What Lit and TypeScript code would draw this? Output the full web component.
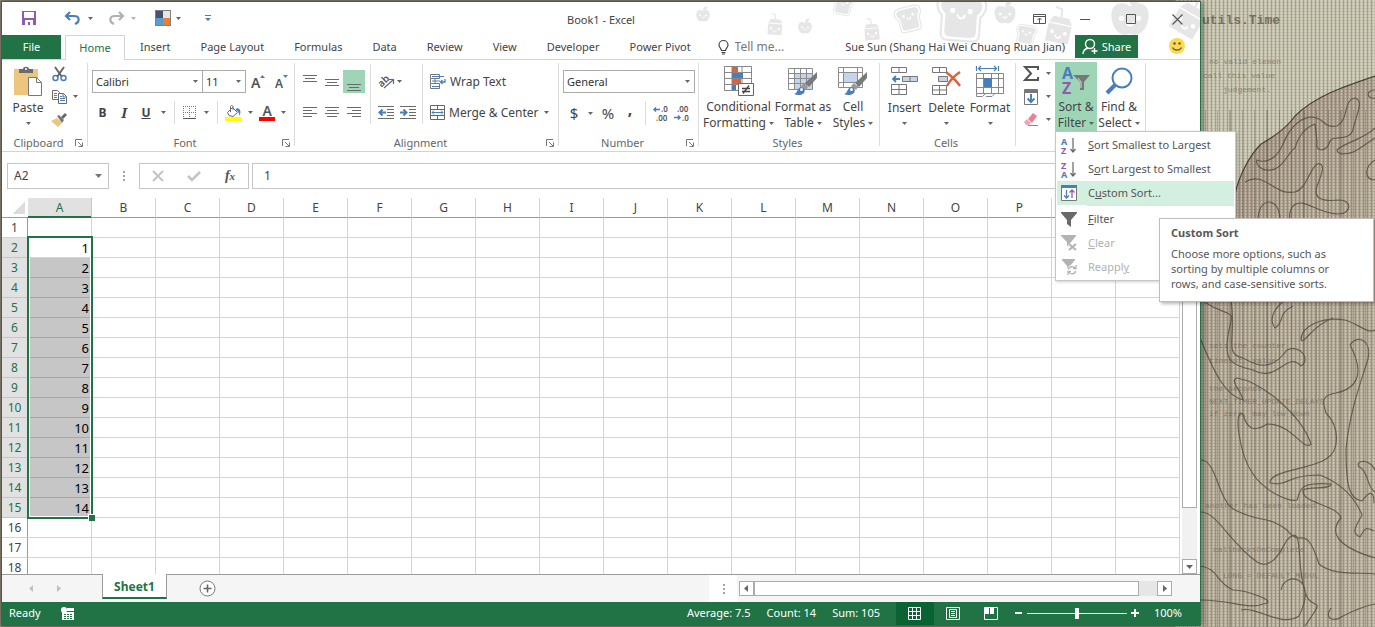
import { LitElement, html, svg, css } from "lit";
import { customElement } from "lit/decorators.js";
import { classMap } from "lit/directives/class-map.js";

const arrow = html`<svg class="arrow" viewBox="0 0 5 3" width="5" height="3"><path d="M0 0h5L2.500 3z" /></svg>`;

const icon = (w: number, h: number, body: unknown) =>
  html`<svg class="icon" width=${w} height=${h} viewBox="0 0 ${w} ${h}" aria-hidden="true">${body}</svg>`;

const BLUE = "#4a7ebb";
const GREY = "#6a6a6a";
const PURPLE = "#8e5bb0";

const lines = (rows: [number, number, number][]) =>
  svg`<g shape-rendering="crispEdges" fill=${GREY}>${rows.map(([x, y, w]) => svg`<rect x=${x} y=${y} width=${w} height="1"/>`)}</g>`;

const brush = svg`<path d="M29 6v6l-8 9-4-4z" fill="#7a7a7a"/><path d="M16 17l4 4-2 3-5-4z" fill="#9a9a9a"/><path d="M6 28c4-1 3-6 7-7 3 0 5 3 3 6-2 2-6 3-10 1z" fill=${BLUE}/><circle cx="13.500" cy="23.500" r="1.500" fill="#fff"/>`;

const icons = {
  save: icon(14, 14, svg`<path d="M0 0h14v14H0z" fill=${PURPLE}/><path d="M2 1h10v6H2zM3 9h8v5H3z" fill="#fff"/><path d="M6 11h2v3H6z" fill=${PURPLE}/>`),
  undo: icon(15, 13, svg`<path d="M2 4h7c6 0 6 6 1 8" fill="none" stroke=${BLUE} stroke-width="2.200"/><path d="M5 0L1 4l4 4" fill="none" stroke=${BLUE} stroke-width="2.200"/>`),
  redo: icon(15, 13, svg`<path d="M13 4H6C0 4 0 10 5 12" fill="none" stroke="#b0b0b0" stroke-width="2.200"/><path d="M10 0l4 4-4 4" fill="none" stroke="#b0b0b0" stroke-width="2.200"/>`),
  theme: icon(16, 16, svg`<path d="M0 0h16v16H0z" fill="#808080"/><path d="M1 1h7v7H1z" fill="#44546a"/><path d="M8 1h7v7H8z" fill="#e7e6e6"/><path d="M1 8h7v7H1z" fill="#5b9bd5"/><path d="M8 8h7v7H8z" fill="#ed7d31"/>`),
  custom: icon(6, 8, svg`<path d="M0 1h6v1H0z M0 4h6L3 7z" fill=${BLUE}/>`),
  ribbon: icon(13, 10, svg`<path d="M.5.5h12v9H.5zM.5 2.500h12M6.500 9V4.500M4.500 6l2-2 2 2" fill="none" stroke="#555"/>`),
  min: icon(10, 10, svg`<path d="M0 5.500h10" stroke="#555"/>`),
  max: icon(10, 10, svg`<path d="M.5.5h9v9h-9z" fill="none" stroke="#555"/>`),
  close: icon(11, 11, svg`<path d="M.5.5l10 10M10.500.5l-10 10" stroke="#555" stroke-width="1.200"/>`),
  bulb: icon(11, 15, svg`<path d="M3.500 10.500c0-2-2.500-3-2.500-5.500a4.500 4.500 0 0 1 9 0c0 2.500-2.500 3.500-2.500 5.500zM3.500 12.500h4M4 14h3" fill="none" stroke="#444" stroke-width="1.200"/>`),
  person: icon(16, 17, svg`<g fill="none" stroke="#fff" stroke-width="1.400"><circle cx="8" cy="6" r="4.500"/><path d="M1 16c0-3 2-5 5-6M12.500 10v6M9.500 13h6"/></g>`),
  smile: icon(16, 16, svg`<circle cx="8" cy="8" r="8" fill="#fbdb4b"/><circle cx="5.500" cy="5.500" r="1.200" fill="#4a5568"/><circle cx="10.500" cy="5.500" r="1.200" fill="#4a5568"/><path d="M3.500 9.500c2 3.500 7 3.500 9 0" fill="none" stroke="#4a5568" stroke-width="1.200"/>`),
  paste: icon(30, 31, svg`<path d="M1 3h24v26H1z" fill="#ecc67e"/><path d="M6 7V3h4c0-3 6-3 6 0h4v4z" fill="#6b6b6b"/><circle cx="13" cy="3" r="1" fill="#fff"/><path d="M15.500 11.500h8l5 5v13h-13z" fill="#fff" stroke="#777"/><path d="M23.500 11.500v5h5" fill="none" stroke="#777"/>`),
  cut: icon(15, 16, svg`<path d="M3 1l7 10M12 1L5 11" stroke="#666" stroke-width="2"/><circle cx="3.500" cy="12" r="2.500" fill="none" stroke=${BLUE} stroke-width="1.500"/><circle cx="11.500" cy="12" r="2.500" fill="none" stroke=${BLUE} stroke-width="1.500"/>`),
  copy: icon(15, 14, svg`<path d="M.5.5h5l2 2v7h-7z" fill="#fff" stroke=${GREY}/><path d="M6.500 3.500h5l3 3v7h-8z" fill="#fff" stroke=${GREY}/><path d="M11 3.500V7h3.500" fill="none" stroke=${GREY}/><path d="M2 3.500h3M2 5.500h3M2 7.500h3M8 6.500h2M8 8.500h5M8 10.500h5" stroke=${BLUE}/>`),
  painter: icon(16, 14, svg`<path d="M0 8l6-3 5 5-4 4z" fill="#ecc67e"/><path d="M6 3l2-1 5 5-2 3z" fill="#777"/><path d="M10 4l4-4 2 2-4 4z" fill="#666"/>`),
  growFont: icon(14, 14, svg`<text x="0" y="13" class="glyph g14">A</text><path d="M9 3h5L11.500 0z" fill=${BLUE}/>`),
  shrinkFont: icon(13, 14, svg`<text x="0" y="13" class="glyph g12">A</text><path d="M8 0h5l-2.500 3z" fill=${BLUE}/>`),
  borders: icon(13, 13, svg`<path d="M.5 0v12M6.500 0v12M12.500 0v12M0 .5h13M0 6.500h13" fill="none" stroke="#777" stroke-dasharray="1 1"/><path d="M0 12.500h13" stroke="#555"/>`),
  fill: icon(16, 16, svg`<path d="M0 12h16v4H0z" fill="#ff0"/><path d="M2.500 7.500l5-5 5 5-4.500 4-4-1z" fill="#fff" stroke="#666"/><path d="M5.500 7V2c0-2 2.500-2 2.500 0v3" fill="none" stroke="#666"/><path d="M12 3c4 1 4 4 2.500 8-.5-3-1-5-4-6z" fill=${BLUE}/>`),
  fontColor: icon(16, 16, svg`<path d="M0 12h16v4H0z" fill="#f00"/><text x="3.500" y="11" class="glyph g14">A</text>`),
  top: icon(14, 22, lines([[0, 4, 14], [2, 7, 10], [0, 10, 14]])),
  middle: icon(14, 22, lines([[0, 8, 14], [2, 11, 10], [0, 14, 14]])),
  bottom: icon(14, 22, lines([[0, 13, 14], [2, 16, 10], [0, 19, 14]])),
  left: icon(14, 11, lines([[0, 0, 14], [0, 3, 9], [0, 6, 14], [0, 9, 9]])),
  center: icon(14, 11, lines([[0, 0, 14], [2, 3, 10], [0, 6, 14], [2, 9, 10]])),
  right: icon(14, 11, lines([[0, 0, 14], [5, 3, 9], [0, 6, 14], [5, 9, 9]])),
  orient: icon(17, 16, svg`<text x="0" y="11" class="glyph g10" transform="rotate(-45 5 8)">ab</text><path d="M6 14l9-8M11 5.500h4.500V10" fill="none" stroke="#666" stroke-width="1.200"/>`),
  outdent: icon(16, 13, svg`${lines([[0, 0, 16], [9, 3, 7], [9, 6, 7], [9, 9, 7], [0, 12, 16]])}<path d="M2 6.500h6M4.500 3.500l-3 3 3 3" fill="none" stroke=${BLUE} stroke-width="2"/>`),
  indent: icon(16, 13, svg`${lines([[0, 0, 16], [9, 3, 7], [9, 6, 7], [9, 9, 7], [0, 12, 16]])}<path d="M0 6.500h6M3.500 3.500l3 3-3 3" fill="none" stroke=${BLUE} stroke-width="2"/>`),
  wrap: icon(16, 15, svg`<path d="M.5.5h9v4h-9zM.5 9.500h9v5h-9zM.5 5v4M5 5v4" fill="none" stroke="#777"/><path d="M2 2.500h12M2 7h8M2 12.500h8" stroke=${BLUE}/><path d="M15 5v3h-4M12.500 6l-2 2 2 2" fill="none" stroke=${BLUE} stroke-width="1.300"/>`),
  merge: icon(15, 15, svg`<path d="M.5.5h14v14H.5zM.5 4.500h14M.5 10.500h14M7.500.5v4M7.500 10.500v4" fill="none" stroke="#666"/><path d="M2 7.500h11M4 5.500l-2 2 2 2M11 5.500l2 2-2 2" fill="none" stroke=${BLUE}/>`),
  incDec: icon(16, 15, svg`<path d="M1 3.500h6M3 1.500l-2 2 2 2" fill="none" stroke=${BLUE} stroke-width="1.500"/><text x="8" y="6" class="glyph g8">.0</text><text x="3" y="15" class="glyph g8">.00</text>`),
  decDec: icon(16, 15, svg`<path d="M0 11.500h6M4 9.500l2 2-2 2" fill="none" stroke=${BLUE} stroke-width="1.500"/><text x="3" y="6" class="glyph g8">.00</text><text x="8" y="15" class="glyph g8">.0</text>`),
  cond: icon(30, 31, svg`<path d="M.5.5h27v24H.5zM.5 6.500h27M.5 12.500h27M.5 18.500h27M8 .5v24M18 .5v24" fill="#fff" stroke="#888"/><path d="M8 1h6v5H8zM8 13h9v5H8z" fill="#d9623f"/><path d="M8 7h11v5H8zM8 19h4v5H8z" fill=${BLUE}/><path d="M14.500 17.500h15v12h-15z" fill="#fff" stroke="#666"/><path d="M18 22.500h8M18 25.500h8M25 19.500l-6 8" stroke="#444" stroke-width="1.300"/>`),
  table: icon(30, 30, svg`<path d="M.5 2.500h27v22H.5z" fill="#fff"/><path d="M7 8h17v16H7z" fill="#c3d5ec"/><path d="M.5 2.500h24v21H.5zM.5 7.500h24M.5 12.500h24M.5 17.500h24M6.500 2.500v21M12.500 2.500v21M18.500 2.500v21" fill="none" stroke="#8c8c8c"/>${brush}`),
  cell: icon(30, 30, svg`<path d="M.5 1.500h26v21H.5z" fill="#fff"/><path d="M6 7h14v9H6z" fill="#c3d5ec"/><path d="M.5 1.500h24v20H.5zM.5 6.500h24M.5 16.500h24M5.500 1.500v20M19.500 1.500v20" fill="none" stroke="#8c8c8c"/>${brush}`),
  insert: icon(27, 28, svg`<path d="M.5.5h15v5H.5zM8 .5v5M.5 17.500h15v10H.5zM8 17.500v10M.5 22.500h15" fill="#fff" stroke="#777"/><path d="M11.500 9.500h15v5h-15zM19 9.500v5" fill="#c3d5ec" stroke="#777"/><path d="M2 12h7M5 9l-3 3 3 3" fill="none" stroke=${BLUE} stroke-width="1.800"/>`),
  del: icon(30, 29, svg`<path d="M.5.5h14v5H.5zM7.500.5v5M.5 18.500h14v9H.5zM7.500 18.500v9M.5 23h14" fill="#fff" stroke="#777"/><path d="M6.500 9.500h9v5h-9z" fill="#c3d5ec" stroke="#777"/><path d="M14 5c5 4 10 8 14 14M28 5c-6 4-10 8-13 14" fill="none" stroke="#d9623f" stroke-width="2.400"/>`),
  format: icon(28, 31, svg`<path d="M.5 0v5M22.500 0v5M2 2.500h19M5 0L2.500 2.500 5 5M18 0l2.500 2.500L18 5" fill="none" stroke=${BLUE} stroke-width="1.200"/><path d="M.5 7.500h27v20H.5zM7.500 7.500v20M15.500 7.500v20M22.500 7.500v20M.5 12.500h27M.5 21.500h27M.5 27.500v3h6l3-3M10 30.500h6l3-3" fill="none" stroke="#888"/><path d="M8 12h8v9H8z" fill=${BLUE}/>`),
  sum: icon(15, 15, svg`<path d="M14 4V1H1l6 6.500L1 14h13v-3" fill="none" stroke="#555" stroke-width="2"/>`),
  down: icon(14, 16, svg`<path d="M.5.5h13v15H.5z" fill="#fff" stroke="#777"/><path d="M1 1h12v3H1z" fill="#777"/><path d="M7 5v8M3.500 9.500L7 13l3.500-3.500" fill="none" stroke=${BLUE} stroke-width="2"/>`),
  eraser: icon(14, 13, svg`<path d="M4 6l5-6 4 3-5 7z" fill="#e8829a"/><path d="M0 9l3-3 4 4-2 2H2z" fill="#f0a5b5"/><path d="M4 12.500h10" stroke="#888"/>`),
  sort: icon(30, 29, svg`<text x="1" y="12" class="az g16" fill=${BLUE}>A</text><text x="1" y="27" class="az g16" fill=${PURPLE}>Z</text><path d="M12 8h17l-6 7v8h-4v-8z" fill="#777"/><path d="M17 11l3 4v6" fill="none" stroke="#ddd"/>`),
  find: icon(28, 28, svg`<circle cx="17" cy="11" r="9.500" fill="#fff" stroke=${BLUE} stroke-width="2"/><path d="M10 18l-8 8" stroke=${BLUE} stroke-width="4"/>`),
  az: icon(16, 17, svg`<text x="0" y="8" class="az g9" fill=${BLUE}>A</text><text x="0" y="17" class="az g9" fill=${PURPLE}>Z</text><path d="M12 1v13M9.500 12l2.500 3 2.500-3" fill="none" stroke="#666" stroke-width="1.200"/>`),
  za: icon(16, 17, svg`<text x="0" y="8" class="az g9" fill=${PURPLE}>Z</text><text x="0" y="17" class="az g9" fill=${BLUE}>A</text><path d="M12 1v13M9.500 12l2.500 3 2.500-3" fill="none" stroke="#666" stroke-width="1.200"/>`),
  customSort: icon(16, 16, svg`<path d="M.5.5h15v15H.5z" fill="#fff" stroke="#777"/><path d="M0 0h16v3H0z" fill=${BLUE}/><path d="M5.500 5v8M3 10.500l2.500 2.500L8 10.500" fill="none" stroke=${BLUE} stroke-width="1.300"/><path d="M11 13V5M8.500 7.500L11 5l2.500 2.500" fill="none" stroke=${PURPLE} stroke-width="1.300"/>`),
  funnel: icon(16, 15, svg`<path d="M0 0h16v1l-6 7v7L6 12V8L0 1z" fill="#6a6a6a"/>`),
  clear: icon(16, 16, svg`<path d="M0 0h15v1l-5 6v5l-4-1V7L0 1z" fill="#b3b3b3"/><path d="M8 9l7 6M15 9l-7 6" stroke="#fff" stroke-width="4"/><path d="M8 9l7 6M15 9l-7 6" stroke="#b3b3b3" stroke-width="2"/>`),
  reapply: icon(16, 16, svg`<path d="M1 0h13v1L9 7v4l-3-1V7L1 1z" fill="#b3b3b3"/><circle cx="11" cy="11" r="5" fill="#fff"/><path d="M7.500 10.500c0-3 5-4 7-1M15 6v3.500h-3M14.500 12c0 3-5 4-7 1M7 16v-3.500h3" fill="none" stroke="#b3b3b3" stroke-width="1.300"/>`),
  launcher: icon(8, 8, svg`<path d="M.5 7V.5H7M3 3l4 4M7.500 3.500v4h-4" fill="none" stroke="#777"/>`),
  macro: icon(13, 13, svg`<path d="M6 1h7v3H6zM1 5h12v8H1z" fill="#fff"/><circle cx="3" cy="3" r="3" fill="#fff"/><path d="M3 7.500h2M6 7.500h2M9 7.500h2M3 9.500h2M6 9.500h2M9 9.500h2M3 11.500h2M6 11.500h2M9 11.500h2" stroke="#217346"/>`),
  normal: icon(13, 13, svg`<path d="M.5.5h12v12H.5zM4.500 0v13M8.500 0v13M0 4.500h13M0 8.500h13" fill="none" stroke="#fff"/>`),
  page: icon(14, 13, svg`<path d="M.5.5h13v12H.5zM3.500 2.500h7v8h-7zM5 4.500h4M5 6.500h4M5 8.500h4" fill="none" stroke="#fff"/>`),
  breaks: icon(14, 13, svg`<path d="M.5.5h13v12H.5z" fill="none" stroke="#fff"/><path d="M1 1h4v6H1zM6 1h4v6H6z" fill="#fff"/>`),
  minus: icon(7, 8, svg`<path d="M0 3h7v2H0z" fill="#fff"/>`),
  plus: icon(8, 8, svg`<path d="M0 3h3V0h2v3h3v2H5v3H3V5H0z" fill="#fff"/>`),
  add: icon(17, 17, svg`<circle cx="8.500" cy="8.500" r="7.500" fill="#fff" stroke="#777"/><path d="M8.500 4.500v8M4.500 8.500h8" stroke="#666" stroke-width="1.600"/>`),
  x: icon(12, 10, svg`<path d="M1 0l10 10M11 0L1 10" stroke="#c4c4c4" stroke-width="2"/>`),
  check: icon(14, 10, svg`<path d="M1 5l4 4 8-8" fill="none" stroke="#c4c4c4" stroke-width="2.500"/>`),
  triLeft: icon(4, 7, svg`<path d="M4 0v7L0 3.500z" fill="currentColor"/>`),
  triRight: icon(4, 7, svg`<path d="M0 0v7l4-3.500z" fill="currentColor"/>`),
  triDown: icon(7, 4, svg`<path d="M0 0h7L3.500 4z" fill="currentColor"/>`),
};

const face = svg`<circle cx="-5" cy="-1" r="1.500" fill="#fff"/><circle cx="5" cy="-1" r="1.500" fill="#fff"/><path d="M-2 1c0 3 4 3 4 0" fill="none" stroke="#fff" stroke-width="1.200"/>`;
const apple = (x: number, y: number, s: number) =>
  svg`<g transform="translate(${x} ${y}) scale(${s})"><path d="M0-8c-5-4-11-1-11 5 0 7 5 14 11 11 6 3 11-4 11-11 0-6-6-9-11-5z"/><path d="M0-9c0-4 3-7 7-6 0 4-3 6-7 6z"/>${face}</g>`;
const toast = (x: number, y: number, s: number, r: number) =>
  svg`<g transform="translate(${x} ${y}) rotate(${r}) scale(${s})"><path d="M-7-13h14c9 0 8 9 4 12v10c0 3-1 4-4 4h-14c-3 0-4-1-4-4v-10c-4-3-5-12 4-12z" fill="none" stroke="#e6e6e6" stroke-width="1.200"/><path d="M-7-11h14c6 0 6 6 2 9v10c0 2-1 3-3 3h-12c-2 0-3-1-3-3v-10c-4-3-4-9 2-9z"/><g transform="translate(0 -3)">${face}</g></g>`;
const milk = (x: number, y: number, s: number, r: number) =>
  svg`<g transform="translate(${x} ${y}) rotate(${r}) scale(${s})"><path d="M-9-4h18v14h-18zM-9-5l3-5h12l3 5z"/><path d="M0-10l-1-6-5-1" fill="none" stroke="#e6e6e6" stroke-width="1.500"/><g transform="translate(0 3)">${face}</g></g>`;

const doodles = html`<svg class="doodles" width="515" height="42" viewBox="0 0 515 42" aria-hidden="true"><g fill="#e6e6e6">
  ${apple(18, 14, 0.62)}${milk(90, 25, 0.78, 4)}${apple(120, 26, 0.62)}${toast(158, 3, 0.75, 12)}${milk(187, 30, 0.8, -4)}
  ${toast(224, 17, 0.95, -14)}${toast(276, 16, 1.75, 4)}${apple(320, 13, 0.95)}${toast(341, 33, 0.75, 10)}${milk(374, 28, 1.3, 12)}
  ${apple(445, 18, 1.7)}${milk(503, 18, 1.5, 30)}</g></svg>`;

const wallpaper = html`<svg class="wallpaper" viewBox="0 0 200 627" width="200" height="627" aria-hidden="true">
  <defs>
    <pattern id="weave" width="4" height="3" patternUnits="userSpaceOnUse"><path d="M0 0h1v3H0z" fill="#4b4238" opacity=".26"/><path d="M2 0h1v2H2z" fill="#fff7dc" opacity=".35"/><path d="M0 2h4v1H0z" fill="#4b4238" opacity=".07"/></pattern>
    <pattern id="fleck" width="37" height="5" patternUnits="userSpaceOnUse"><path d="M5 0h1v5H5zM17 0h2v5h-2zM30 0h1v5h-1z" fill="#3b3229" opacity=".25"/></pattern>
    <linearGradient id="shade" x1="0" y1="0" x2=".4" y2="1"><stop offset="0" stop-color="#9a897c"/><stop offset=".45" stop-color="#b4a997"/><stop offset="1" stop-color="#b9b09e"/></linearGradient>
  </defs>
  <path d="M0 0h200v627H0z" fill="#c6c4af"/>
  <path d="M200 76c-30 10-60 20-80 40-10 14-24 22-34 28-12 12-22 32-26 50L26 260v367h174z" fill="url(#shade)"/>
  <path d="M0 0h200v627H0z" fill="url(#weave)"/>
  <path d="M26 110h174v517H26z" fill="url(#fleck)"/>
  <g fill="none" stroke="#544c40" stroke-width="1.200" opacity=".8">
    <path d="M200 76c-30 10-60 20-80 40-10 14-24 22-34 28-12 12-22 32-26 50" stroke="#2c2822"/>
    <path d="M82 160c10 4 20-2 26-16 8-20 22-30 34-26 8 3 8 10 20 8 12-6 6-26 18-28 10 2 0 20-2 32-6 14-22 2-24 14-4 8-14 8-12-2l-2-18c-12 4-18 16-20 24-6 2-12 24-28 22-6 0-12-6-10-10z"/>
    <path d="M200 128c-12 12-30 14-38 22 0 6 14 4 20 0l18-12M200 90c-10 0-8 10 0 8M200 160c-10 6-12 20 0 20"/>
    <path d="M70 182c20-12 28 14 50 10 12-4 14-22 22-28 10-2 4 12 0 22-4 12 4 16 22 14 14 0 12 14 0 14-22 0-36-18-46-8-6 8-2 12-4 20M83 220c0-24 22-24 22 0"/>
    <path d="M26 300c30 20 34 6 28 30-6 30 0 34 24 40 24 14 34-20 48-4 10-6 0-22-14-16-16 22-30 16-44 8-20-4-6-20-12-58M110 300c-8 6-18 18-10 28 10-6 2-14 18-22M126 340c0-14 22-24 44-20 14 4 22 14 30 10M126 340c4 4 10-14 32-22"/>
    <path d="M26 340c12 30 24 56 42 60-2-10-14-20-6-22 24 4 64 36 74 66-8 8-18-20-44-20-12 8-20 6-24-10-10-6-4 40 10 60 14 20 38 28 44 26 4-10 0-18 34-16 0 6-22 2-28 6-2 14 34 14 38 28-14 16 0 30 34 40"/>
    <path d="M175 345c8-12 22-4 18 14-6 20-18 50-22 90 0 40 4 50 16 52 10-14 12-6 12 2M175 345c16 30 6 44-14 48-14 2-14 8-10 20 14 14 14 38 0 46-14 10-58 12-56 24 18 4 16-8 50-8 20 8 34 20 42 40-8 14-10 18-2 22 4-6 4-12 14-6"/>
    <path d="M26 460c16 0 16 40 34 50 28 14 30 4 52 20 14 20 18-10 32 34 14 12 40 8 56 10M26 512c16 0 28 30 56 50 16 10 26-16 30-22 18-18 8 20 18 52 6 22 24 0 0 34M26 600c30 0 48 10 62 4 18-2-18-14-30-14-18-8-14-22-34-24M156 608c-8 12 4 14 12 8 8-4 20-10 32-12M200 470c-6-14-24-8-14-2 8 6 6 20 14 24M66 610c16-4 40 18 58 6 20-40-14-46-18-26"/>
  </g>
  <g>
    <text x="27" y="24" class="mono dark">utils.Time</text>
    <text x="34" y="64" class="mono">no valid elemen</text><text x="28" y="78" class="mono">call this value</text><text x="48" y="92" class="mono">judgement.</text>
    <text x="34" y="348" class="mono">sets the counter</text><text x="34" y="363" class="mono">timeout, value.</text><text x="34" y="391" class="mono">the seconds.</text><text x="34" y="404" class="mono">NEXT_TIMER_UPDATE_DELAYS</text><text x="34" y="416" class="mono">if zero, may low down</text>
    <text x="30" y="508" class="mono">another has been loaded</text><text x="38" y="552" class="mono">callbacksOnComplete</text><text x="48" y="578" class="mono">LONG = DEFAULT_MODUL</text>
  </g></svg>`;

const COLS = "ABCDEFGHIJKLMNOPQR".split("");
const ROWS = Array.from({ length: 18 }, (_, i) => i + 1);
const TABS = ["Insert", "Page Layout", "Formulas", "Data", "Review", "View", "Developer", "Power Pivot"];

@customElement("app-root")
export class AppRoot extends LitElement {
  static styles = css`
    :host { display: block; position: relative; height: 100vh; box-sizing: border-box; padding: 1px 174px 1px 1px; overflow: hidden; background: #8f8877;
      font: 11px/16px "Noto Sans", "Open Sans", sans-serif; color: #444; }
    * { box-sizing: border-box; }
    button, input, select { font: inherit; color: inherit; border: 0; padding: 0; margin: 0; background: none; border-radius: 0; outline: 0; }
    button { display: flex; align-items: center; justify-content: center; }
    a { color: inherit; text-decoration: none; }
    .icon, .arrow { display: block; flex: none; overflow: visible; }
    .arrow path { fill: #666; }
    .glyph { fill: #555; font-weight: 600; }
    .az { font-weight: 700; }
    .g8 { font-size: 8px; } .g9 { font-size: 9px; } .g10 { font-size: 10px; } .g12 { font-size: 12px; } .g14 { font-size: 14px; } .g16 { font-size: 16px; }
    .wallpaper { position: absolute; top: 0; right: 0; }
    .mono { font: 8px "Liberation Mono", monospace; fill: #5c574b; opacity: .55; }
    .dark { font-size: 13px; font-weight: 700; opacity: .75; }
    .window { position: relative; height: 100%; display: flex; flex-direction: column; background: #fff; border: 1px solid #217346; box-shadow: 1px 0 6px #0008; }
    .doodles { position: absolute; right: 0; top: 0; }

    .title { position: relative; display: grid; grid-template-columns: 1fr auto 1fr; height: 33px; flex: none; }
    .title h1 { margin: 0; font: inherit; line-height: 36px; }
    .qat { display: grid; grid-template-columns: 20px 34px 32px 13px 30px 19px 26px 6px 52px; padding-bottom: 4px; }
    .qat .dim { opacity: .5; }
    .qat .begin, .qat .arrow { justify-self: start; }
    .qat button[aria-label$="list"] { justify-content: flex-start; }
    .controls { display: flex; justify-content: flex-end; padding-bottom: 2px; }
    .controls button { width: 46px; }
    .tabs { position: relative; display: flex; flex: none; height: 25px; border-bottom: 1px solid #d4d4d4; align-items: stretch; }
    .tabs a { padding: 0 15px; line-height: 24px; white-space: nowrap; }
    .tabs .file { background: #217346; color: #fff; width: 59px; text-align: center; padding: 0; margin-right: 4px; }
    .tabs .home { color: #217346; background: #fff; border: 1px solid #d4d4d4; border-bottom: 0; width: 60px; padding: 0; text-align: center; height: 25px; line-height: 23px; }
    .tell { display: flex; align-items: center; gap: 6px; margin-left: 12px; flex: 1 1 60px; min-width: 60px; }
    .tell input { width: 60px; }
    .tell input::placeholder { color: #777; opacity: 1; }
    .user { line-height: 24px; white-space: nowrap; margin-right: 10px; }
    .share { background: #217346; color: #fff; width: 63px; height: 23px; gap: 4px; }
    .smile { width: 62px; padding: 0 0 2px 16px; }

    .ribbon { display: flex; flex: none; height: 92px; border-bottom: 1px solid #d4d4d4; }
    .group { display: flex; flex-direction: column; position: relative; flex: none; }
    .group::after { content: ""; position: absolute; right: 0; top: 3px; bottom: 5px; width: 1px; background: #dcdcdc; }
    .group footer { height: 16px; display: grid; grid-template-columns: 1fr auto; align-items: center; text-align: center; color: #666; padding-right: 4px; }
    .group footer .icon { margin-right: 1px; }
    .body { flex: 1; }
    .clipboard { width: 86px; } .font { width: 207px; } .align { width: 264px; } .number { width: 140px; } .styles { width: 181px; } .cells { width: 136px; } .editing { width: 130px; }
    .clipboard .body { display: grid; grid-template-columns: 44px 18px 14px; padding: 2px 0 0 4px; }
    .stack { display: grid; grid-template-rows: repeat(3, 23px); }
    .rows { display: grid; grid-template-rows: 23px 23px; gap: 8px 0; padding: 10px 4px 0; align-content: start; }
    .row { display: grid; }
    .f1 { grid-template-columns: 111px 43px 24px 22px; }
    .f2 { grid-template-columns: 21px 22px 22px 13px 8px 22px 12px 10px 22px 12px 21px 12px; }
    .n2 { grid-template-columns: 22px 11px 24px 20px 10px 21px 22px; }
    .al { grid-template-columns: 22px 22px 22px 10px 22px 22px 6px 1fr; }
    .sep { width: 1px; background: #dcdcdc; justify-self: center; }
    .tall { grid-row: 1 / 3; margin-top: -6px; }
    .c4 { grid-column: 4; } .c7 { grid-column: 7; }
    select { appearance: none; border: 1px solid #ababab; padding: 0 3px; width: 100%; height: 23px; color: #333; }
    .pick { display: grid; }
    .pick > * { grid-area: 1 / 1; }
    .pick .arrow { place-self: center end; margin-right: 5px; pointer-events: none; }
    .joined { border-left: 0; }
    .on { background: #9fd5b7; }
    .wide { justify-content: flex-start; gap: 4px; padding-left: 5px; white-space: nowrap; font-size: 12px; }
    .wide .arrow { margin-left: auto; margin-right: 6px; }
    .begin { justify-content: flex-start; }
    .b { font-weight: 700; font-size: 12px; } .i { font-style: italic; font-family: "Noto Serif", "Liberation Serif", serif; font-weight: 700; font-size: 14px; } .u { font-weight: 700; font-size: 12px; text-decoration: underline; }
    .sign { font-size: 15px; }
    .comma { font-size: 16px; font-weight: 700; padding-bottom: 8px; }
    .big { flex-direction: column; justify-content: flex-start; white-space: nowrap; height: 69px; padding-top: 2px; }
    .big .pic { height: 37px; display: grid; place-items: center; padding-bottom: 1px; }
    .big .line { display: flex; align-items: center; gap: 3px; height: 16px; }
    .ribbon .bigs { display: grid; padding: 2px 0 0 3px; }
    .s3 { grid-template-columns: 73px 56px 44px; }
    .c3 { grid-template-columns: 43px 41px 46px; }
    .editing .bigs { padding-left: 4px; grid-template-columns: 22px 13px 42px 44px; }
    .anchor { position: relative; }
    .anchor > .big { width: 100%; }
    .big, .user, .tell { font-size: 12px; }
    .user { font-size: 11px; }

    .menu { position: absolute; z-index: 5; top: 69px; left: 0; width: 181px; background: #fff; border: 1px solid #c6c6c6; box-shadow: 1px 1px 3px #0003; padding: 1px; }
    .menu button { width: 100%; height: 24px; display: grid; grid-template-columns: 24px 1fr; gap: 7px; text-align: left; white-space: nowrap; justify-items: center; color: #555; }
    .menu span { justify-self: start; }
    .menu button.hot { background: #d3efe0; }
    .menu button:disabled { color: #b1b1b1; }
    .menu hr { border: 0; border-top: 1px solid #e1e1e1; margin: 0 0 1px 30px; }
    .tip { position: absolute; z-index: 6; left: 103px; top: 86px; width: 215px; height: 84px; background: #fff; border: 1px solid #bebebe; padding: 6px 11px; box-shadow: 2px 2px 3px #0004; color: #575757; line-height: 15px; }
    .tip strong { display: block; line-height: 16px; margin-bottom: 5px; }
    .tip p { margin: 0; white-space: pre-line; }

    .formula { display: flex; flex: none; height: 46px; padding: 11px 0 9px 5px; font-size: 12px; }
    .box { border: 1px solid #c6c6c6; display: flex; align-items: center; }
    .name { width: 102px; }
    .name input { flex: 1; min-width: 0; padding-left: 6px; }
    .name button { width: 20px; color: #777; }
    .dots { width: 30px; display: grid; place-items: center; }
    .dots i { width: 2px; height: 10px; background: repeating-linear-gradient(#a6a6a6 0 2px, transparent 2px 4px); }
    .fns { width: 110px; display: grid; grid-template-columns: repeat(3, 36px); }
    .fx { font: italic 700 14px "Liberation Serif", serif; color: #555; }
    .fx small { font-size: 11px; }
    .value { flex: 1; margin-left: 3px; border-right: 0; }
    .value input { width: 100%; padding-left: 11px; }

    .sheet { flex: 1; min-height: 0; display: flex; }
    .cellsArea { position: relative; flex: 1; min-width: 0; overflow: hidden; }
    table { border-collapse: separate; border-spacing: 0; table-layout: fixed; width: 1178px; font-size: 12px; }
    th, td { height: 20px; padding: 1px 0 0; border-right: 1px solid #d4d4d4; border-bottom: 1px solid #d4d4d4; line-height: 18px; }
    col { width: 64px; } .rh { width: 26px; }
    th { font-weight: 400; color: #444; }
    thead th { border-bottom-color: #9b9b9b; }
    tbody th { border-right-color: #9b9b9b; }
    th.sel { background: #e1e1e1; color: #217346; border-color: #c6c6c6; }
    thead th.sel { box-shadow: inset 0 -1px #217346; border-bottom-color: #217346; }
    .corner { background: linear-gradient(135deg, transparent 50%, #dcdcdc 50%) no-repeat 11px 4px / 12px 12px; border-right: 0; }
    td { text-align: right; color: #000; font-size: 13px; padding-right: 2px; }
    td.grey { background: #c6c6c6; border-bottom-color: #a6a6a6; }
    .range { position: absolute; left: 25px; top: 38px; width: 66px; height: 283px; border: 2px solid #217346; pointer-events: none; box-shadow: inset 0 0 0 1px #fff; }
    .range::after { content: ""; position: absolute; right: -4px; bottom: -4px; width: 6px; height: 6px; background: #217346; border: solid #fff; border-width: 1px 0 0 1px; }
    .vbar { width: 20px; padding: 0 3px 0 2px; display: flex; flex-direction: column; background: #fff; }
    .vtrack { flex: 1; background: #f1f1f1; }
    .vtrack div { height: 86%; background: #fff; border: 1px solid #ababab; }
    .step { width: 15px; height: 15px; border: 1px solid #ababab; color: #666; background: #fff; flex: none; }

    .bottom { display: flex; flex: none; height: 28px; border-top: 1px solid #9b9b9b; background: #f5f5f5; }
    .sheets { flex: 1; display: flex; align-items: flex-start; color: #c0c0c0; }
    .sheets button { width: 28px; height: 26px; }
    .nav { margin-left: 15px; }
    .nav2 { margin-right: 29px; }
    .sheets a { background: #fff; color: #217346; font-weight: 700; font-size: 12px; width: 65px; text-align: center; height: 25px; line-height: 25px; margin-top: -1px; border: 1px solid #9b9b9b; border-width: 0 1px 2px; border-bottom-color: #217346; }
    .sheets .add { margin-left: 27px; width: 26px; }
    .hwrap { width: 41%; display: flex; align-items: center; padding-right: 28px; background: linear-gradient(90deg, #fff 28px, #f5f5f5 28px); }
    .htrack { flex: 1; height: 15px; background: #e6e6e6; }
    .htrack div { width: 95.500%; height: 15px; background: #fff; border: 1px solid #ababab; }
    .status { display: flex; flex: none; height: 23px; background: #217346; color: #fff; align-items: center; padding: 0 18px 1px 7px; }
    .status .grow { flex: 1; display: flex; gap: 20px; align-items: center; }
    .stat { margin-right: 16px; white-space: nowrap; }
    .view { width: 38px; height: 23px; }
    .view.cur { background: #0a6332; }
    .zoom { display: flex; align-items: center; margin-left: 2px; }
    .zoom button { width: 14px; height: 22px; }
    input[type="range"] { appearance: none; width: 100px; height: 12px; margin: 0 1px; background: linear-gradient(#fff, #fff) no-repeat center / 100% 1px; }
    input[type="range"]::-webkit-slider-thumb { appearance: none; width: 4px; height: 11px; background: #fff; }
    .pct { margin-left: 12px; }
  `;

  private group(cls: string, label: string, body: unknown, launcher = false) {
    return html`<section class="group ${cls}">${body}<footer><span>${label}</span>${launcher ? html`<button aria-label="${label} settings">${icons.launcher}</button>` : ""}</footer></section>`;
  }

  private drop(label: string) {
    return html`<button aria-label=${label}>${arrow}</button>`;
  }

  private big(pic: unknown, a: string, b: string, on = false) {
    return html`<button class=${classMap({ big: true, on })}><span class="pic">${pic}</span><span class="line">${a}</span><span class="line">${b} ${arrow}</span></button>`;
  }

  private ribbon() {
    const sep = html`<i class="sep"></i>`;
    return html`<div class="ribbon">
      ${this.group("clipboard", "Clipboard", html`<div class="body">
        ${this.big(icons.paste, "Paste", "")}
        <div class="stack"><button aria-label="Cut">${icons.cut}</button><button aria-label="Copy">${icons.copy}</button><button aria-label="Format Painter">${icons.painter}</button></div>
        <div class="stack"><i></i>${this.drop("Copy options")}</div></div>`, true)}
      ${this.group("font", "Font", html`<div class="body rows">
        <div class="row f1"><label class="pick"><select aria-label="Font"><option>Calibri</option></select>${arrow}</label>
          <label class="pick"><select class="joined" aria-label="Font size"><option>11</option></select>${arrow}</label>
          <button aria-label="Increase font size">${icons.growFont}</button><button aria-label="Decrease font size">${icons.shrinkFont}</button></div>
        <div class="row f2"><button class="b">B</button><button class="i">I</button><button class="u">U</button>${this.drop("Underline options")}${sep}
          <button aria-label="Borders">${icons.borders}</button>${this.drop("Border options")}${sep}
          <button aria-label="Fill Color">${icons.fill}</button>${this.drop("Fill options")}<button aria-label="Font Color">${icons.fontColor}</button>${this.drop("Color options")}</div></div>`, true)}
      ${this.group("align", "Alignment", html`<div class="body rows al">
        <i class="sep tall c4"></i><i class="sep tall c7"></i>
        <button aria-label="Top">${icons.top}</button><button aria-label="Middle">${icons.middle}</button><button class="on" aria-label="Bottom">${icons.bottom}</button>
        <button aria-label="Orientation">${icons.orient}</button><button class="begin" aria-label="Orientation options">${arrow}</button>
        <button class="wide">${icons.wrap}Wrap Text</button>
        <button aria-label="Left">${icons.left}</button><button aria-label="Center">${icons.center}</button><button aria-label="Right">${icons.right}</button>
        <button aria-label="Decrease indent">${icons.outdent}</button><button aria-label="Increase indent">${icons.indent}</button>
        <button class="wide">${icons.merge}Merge &amp; Center${arrow}</button></div>`, true)}
      ${this.group("number", "Number", html`<div class="body rows">
        <label class="pick"><select aria-label="Number format"><option>General</option></select>${arrow}</label>
        <div class="row n2"><button class="sign">$</button>${this.drop("Currency options")}<button class="sign">%</button><button class="comma">,</button>${sep}
          <button aria-label="Increase Decimal">${icons.incDec}</button><button aria-label="Decrease Decimal">${icons.decDec}</button></div></div>`, true)}
      ${this.group("styles", "Styles", html`<div class="body bigs s3">${this.big(icons.cond, "Conditional", "Formatting")}${this.big(icons.table, "Format as", "Table")}${this.big(icons.cell, "Cell", "Styles")}</div>`)}
      ${this.group("cells", "Cells", html`<div class="body bigs c3">${this.big(icons.insert, "Insert", "")}${this.big(icons.del, "Delete", "")}${this.big(icons.format, "Format", "")}</div>`)}
      ${this.group("editing", "", html`<div class="body bigs">
        <div class="stack"><button aria-label="AutoSum">${icons.sum}</button><button aria-label="Fill">${icons.down}</button><button aria-label="Clear">${icons.eraser}</button></div>
        <div class="stack">${this.drop("Sum options")}${this.drop("Fill options")}${this.drop("Clear options")}</div>
        <div class="anchor">${this.big(icons.sort, "Sort &", "Filter", true)}${this.menu()}</div>
        ${this.big(icons.find, "Find &", "Select")}</div>`)}
    </div>`;
  }

  private menu() {
    return html`<div class="menu" role="menu">
      <button role="menuitem">${icons.az}<span><u>S</u>ort Smallest to Largest</span></button>
      <button role="menuitem">${icons.za}<span>S<u>o</u>rt Largest to Smallest</span></button>
      <button role="menuitem" class="hot">${icons.customSort}<span>C<u>u</u>stom Sort...</span></button>
      <hr />
      <button role="menuitem">${icons.funnel}<span><u>F</u>ilter</span></button>
      <button role="menuitem" disabled>${icons.clear}<span><u>C</u>lear</span></button>
      <button role="menuitem" disabled>${icons.reapply}<span>Reappl<u>y</u></span></button>
      <div class="tip" role="tooltip"><strong>Custom Sort</strong><p>Choose more options, such as
sorting by multiple columns or
rows, and case-sensitive sorts.</p></div>
    </div>`;
  }

  private grid() {
    const inRange = (r: number) => r >= 2 && r <= 15;
    return html`<table>
      <colgroup><col class="rh" />${COLS.map(() => html`<col />`)}</colgroup>
      <thead><tr><th class="corner"></th>${COLS.map((c) => html`<th class=${classMap({ sel: c === "A" })}>${c}</th>`)}</tr></thead>
      <tbody>${ROWS.map((r) => html`<tr><th class=${classMap({ sel: inRange(r) })}>${r}</th>${COLS.map((c) =>
        c === "A" && inRange(r) ? html`<td class=${classMap({ grey: r > 2 })}>${r - 1}</td>` : html`<td></td>`)}</tr>`)}</tbody>
    </table>`;
  }

  render() {
    return html`${wallpaper}
      <div class="window">
        ${doodles}
        <header class="title">
          <div class="qat"><i></i><button aria-label="Save" class="begin">${icons.save}</button>
            <button aria-label="Undo">${icons.undo}</button>${this.drop("Undo list")}<button aria-label="Redo">${icons.redo}</button><button class="dim" aria-label="Redo list">${arrow}</button>
            <button aria-label="Theme colors">${icons.theme}</button>${this.drop("Theme list")}<button aria-label="Customize toolbar">${icons.custom}</button></div>
          <h1>Book1 - Excel</h1>
          <div class="controls"><button aria-label="Ribbon display">${icons.ribbon}</button><button aria-label="Minimize">${icons.min}</button><button aria-label="Maximize">${icons.max}</button><button aria-label="Close">${icons.close}</button></div>
        </header>
        <nav class="tabs"><a class="file" href="#file">File</a><a class="home" href="#home">Home</a>${TABS.map((t) => html`<a href="#tab">${t}</a>`)}
          <label class="tell">${icons.bulb}<input aria-label="Tell me" placeholder="Tell me..." /></label>
          <span class="user">Sue Sun (Shang Hai Wei Chuang Ruan Jian)</span><button class="share">${icons.person}Share</button><button class="smile" aria-label="Feedback">${icons.smile}</button></nav>
        ${this.ribbon()}
        <div class="formula">
          <div class="box name"><input aria-label="Name box" value="A2" /><button aria-label="Names">${icons.triDown}</button></div>
          <span class="dots"><i></i></span>
          <div class="box fns"><button aria-label="Cancel">${icons.x}</button><button aria-label="Enter">${icons.check}</button><button class="fx" aria-label="Insert function">f<small>x</small></button></div>
          <div class="box value"><input aria-label="Formula" value="1" /></div>
        </div>
        <main class="sheet"><div class="cellsArea">${this.grid()}<div class="range"></div></div>
          <div class="vbar"><div class="vtrack"><div></div></div><button class="step" aria-label="Scroll down">${icons.triDown}</button></div></main>
        <div class="bottom">
          <div class="sheets"><button class="nav" aria-label="Previous sheet">${icons.triLeft}</button><button class="nav2" aria-label="Next sheet">${icons.triRight}</button><a href="#sheet1">Sheet1</a><button class="add" aria-label="New sheet">${icons.add}</button></div>
          <div class="hwrap"><span class="dots"><i></i></span><button class="step" aria-label="Scroll left">${icons.triLeft}</button><div class="htrack"><div></div></div><button class="step" aria-label="Scroll right">${icons.triRight}</button></div>
        </div>
        <footer class="status"><div class="grow"><span>Ready</span>${icons.macro}</div>
          <span class="stat">Average: 7.5</span><span class="stat">Count: 14</span><span class="stat">Sum: 105</span>
          <button class="view cur" aria-label="Normal">${icons.normal}</button><button class="view" aria-label="Page Layout">${icons.page}</button><button class="view" aria-label="Page Break">${icons.breaks}</button>
          <div class="zoom"><button aria-label="Zoom out">${icons.minus}</button><input type="range" aria-label="Zoom" min="0" max="100" value="50" /><button aria-label="Zoom in">${icons.plus}</button></div><span class="pct">100%</span></footer>
      </div>`;
  }
}
